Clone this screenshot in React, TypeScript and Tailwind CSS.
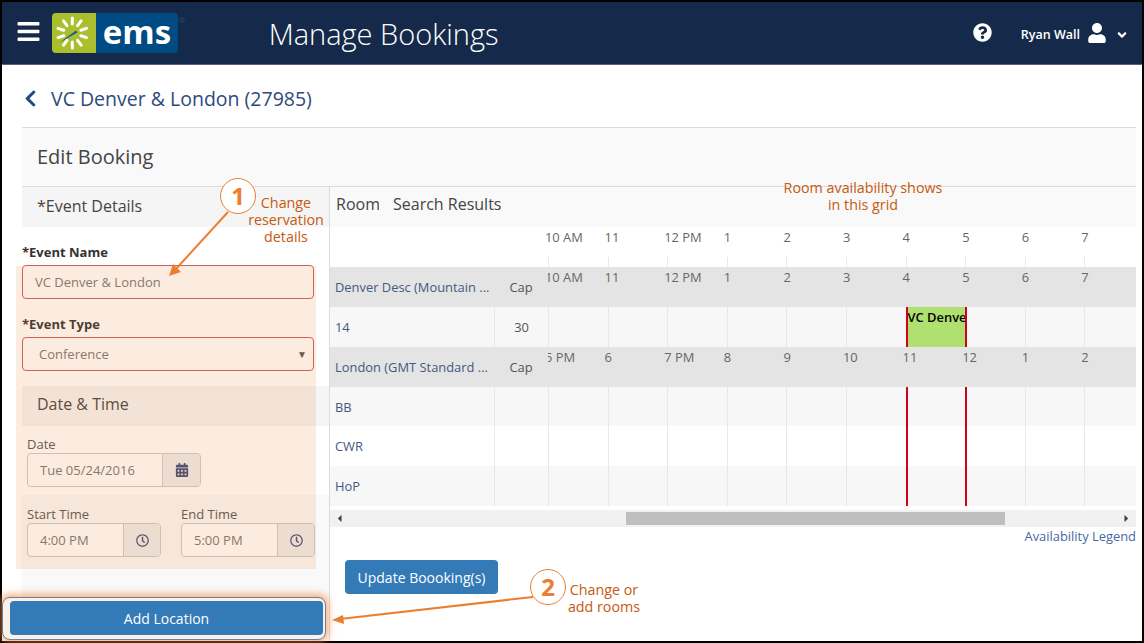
import React from 'react';
import { FaBars, FaQuestionCircle, FaUser, FaChevronLeft, FaCalendarAlt, FaRegClock, FaCaretLeft, FaCaretRight, FaAngleDown } from 'react-icons/fa';

const denverHours = ['10 AM', '11', '12 PM', '1', '2', '3', '4', '5', '6', '7'];
const londonHours = ['5 PM', '6', '7 PM', '8', '9', '10', '11', '12', '1', '2'];
const cols = [0, 1, 2, 3, 4, 5, 6, 7, 8, 9];

const LogoMark = () => (
  <svg width="44" height="40" viewBox="0 0 44 40">
    {[0, 36, 72, 108, 144, 180, 216, 252, 288, 324].map((a) => (
      <line
        key={a}
        x1={20.3 + 9 * Math.sin((a * Math.PI) / 180)}
        y1={20 - 9 * Math.cos((a * Math.PI) / 180)}
        x2={20.3 + 15 * Math.sin((a * Math.PI) / 180)}
        y2={20 - 15 * Math.cos((a * Math.PI) / 180)}
        stroke="#fff"
        strokeWidth="3"
        strokeLinecap="round"
      />
    ))}
    <path d="M7 30 L24 17.5 L25.5 19.5 Z" fill="#1d5c8f" />
  </svg>
);

const Row = ({ name, cap, bg, children }: { name: string; cap: string; bg: string; children: React.ReactNode }) => (
  <div className={`flex shrink-0 ${bg}`}>
    <div className="w-[164px] pl-[5px] pt-[2px] flex items-center text-[#44597f] whitespace-nowrap">{name}</div>
    <div className="w-[54px] pt-[2px] border-l border-[#e8e8e8] flex items-center justify-center text-[#555]">{cap}</div>
    <div className="flex-1 flex overflow-hidden">{children}</div>
  </div>
);

const HeadRow = ({ name, hours }: { name: string; hours: string[] }) => (
  <div className="flex h-[40px] shrink-0 bg-[#e4e4e4]">
    <div className="w-[164px] pl-[5px] pt-[2px] flex items-center text-[#44597f] whitespace-nowrap">{name}</div>
    <div className="w-[54px] pt-[2px] flex items-center justify-center text-[#555]">Cap</div>
    <div className="flex-1 flex overflow-hidden">
      {hours.map((h) => (
        <div key={h} className="w-[59.6px] shrink-0 text-[#666] leading-[20px] whitespace-nowrap">
          <span className="block -ml-[3px]">{h}</span>
        </div>
      ))}
    </div>
  </div>
);

const Cells = ({ red }: { red?: boolean }) => (
  <>
    {cols.map((c) => (
      <div
        key={c}
        className={`w-[59.6px] shrink-0 border-l ${red && (c === 6 || c === 7) ? 'border-l-2 border-[#d0021b]' : 'border-[#e8e8e8]'}`}
      />
    ))}
  </>
);

const AddonInput = ({ value, width, addon, icon }: { value: string; width: string; addon: string; icon: React.ReactNode }) => (
  <div className={`flex h-[34px] ${width} border border-[#ccc] rounded bg-white overflow-hidden`}>
    <div className="flex-1 pl-[12px] pt-[1px] flex items-center text-[13px] text-[#777]">{value}</div>
    <div className={`${addon} bg-[#eee] border-l border-[#ccc] flex items-center justify-center text-[#3f4a78]`}>{icon}</div>
  </div>
);

export default function App() {
  return (
    <div className="relative w-[1144px] h-[643px] bg-white overflow-hidden font-['Open_Sans',sans-serif]">
      <div className="w-[1144px] h-[643px] border-2 border-black flex flex-col">
        {/* Header */}
        <header className="h-[63px] shrink-0 bg-[#152a4a] border-b border-[#56657c] flex items-center text-white">
          <FaBars className="ml-[14px] text-[25px] -mt-[4px]" />
          <div className="ml-[11px] flex items-center h-[40px]">
            <div className="w-[44px] h-[40px] bg-[#a9bf2e] rounded-l"><LogoMark /></div>
            <div className="w-[82px] h-[40px] bg-[#004b83] rounded-r flex items-center justify-center text-[33px] font-bold leading-none pb-[3px]">ems</div>
            <span className="self-start text-[8px] text-[#1d4a7a] ml-[1px] mt-[1px]">®</span>
          </div>
          <h1 className="ml-[83px] text-[29px] font-light leading-none">Manage Bookings</h1>
          <div className="ml-auto flex items-center">
            <FaQuestionCircle className="text-[19px] -mt-[2px]" />
            <span className="ml-[29px] text-[12.5px] font-semibold mt-[4px]">Ryan Wall</span>
            <FaUser className="ml-[7px] text-[20px]" />
            <FaAngleDown className="ml-[8px] text-[14px] mt-[4px]" />
            <div className="w-[13px]" />
          </div>
        </header>

        {/* Page */}
        <div className="flex-1 pl-[20px] pr-[6px] flex flex-col">
          <div className="h-[63px] shrink-0 border-b border-[#dcdcdc] flex items-center text-[#2c4a7c] text-[19.5px]">
            <FaChevronLeft className="-ml-[1px] text-[19px] text-[#234a80] mt-[4px]" />
            <span className="ml-[11px] mt-[6px]">VC Denver &amp; London (27985)</span>
          </div>
          <div className="h-[59px] shrink-0 border-b border-[#dcdcdc] bg-[#f9f9f9] flex items-center pl-[15px] text-[20px] text-[#444]">Edit Booking</div>

          <div className="flex-1 flex">
            {/* Left column */}
            <div className="w-[308px] shrink-0 border-r border-[#dcdcdc] flex flex-col">
              <div className="h-[40px] shrink-0 bg-[#f5f5f5] flex items-center pl-[15px] pb-[2px] text-[16px] text-[#444]">*Event Details</div>
              <label className="mt-[16px] h-[18px] leading-[18px] text-[13px] font-bold text-[#333]">*Event Name</label>
              <div className="mt-[4px] w-[292px] h-[34px] shrink-0 border border-[#c9605a] rounded bg-white flex items-center pl-[12px] pt-[1px] text-[13px] text-[#777]">VC Denver &amp; London</div>
              <label className="mt-[16px] h-[18px] leading-[18px] text-[13px] font-bold text-[#333]">*Event Type</label>
              <div className="mt-[4px] w-[292px] h-[34px] shrink-0 border border-[#c9605a] rounded bg-white flex items-center pl-[16px] pr-[6px] pt-[1px] text-[13px] text-[#777]">
                Conference
                <span className="ml-auto text-[10px] text-[#555]">▼</span>
              </div>
              <div className="mt-[15px] h-[40px] shrink-0 bg-[#f5f5f5] flex items-center pl-[15px] pb-[4px] text-[16px] text-[#444]">Date &amp; Time</div>
              <label className="mt-[9px] ml-[5px] h-[18px] leading-[18px] text-[13px] text-[#555]">Date</label>
              <div className="ml-[5px]">
                <AddonInput value="Tue 05/24/2016" width="w-[174px]" addon="w-[38px]" icon={<FaCalendarAlt className="text-[14px]" />} />
              </div>
              <div className="mt-[8px] h-[105px] shrink-0 bg-[#f9f9f9] pl-[5px] pt-[10px]">
                <div className="flex gap-[20px]">
                  <div>
                    <div className="h-[18px] leading-[18px] text-[13px] text-[#555]">Start Time</div>
                    <AddonInput value="4:00 PM" width="w-[134px]" addon="w-[37px]" icon={<FaRegClock className="text-[13px]" />} />
                  </div>
                  <div>
                    <div className="h-[18px] leading-[18px] text-[13px] text-[#555]">End Time</div>
                    <AddonInput value="5:00 PM" width="w-[134px]" addon="w-[37px]" icon={<FaRegClock className="text-[13px]" />} />
                  </div>
                </div>
              </div>
              <div className="relative z-20 -mt-[3px] -ml-[20px] w-[324px] h-[43px] shrink-0 border border-[#5f85ad] rounded-lg bg-[#fdf0e6] shadow-[0_0_7px_3px_rgba(240,130,50,0.6)] pl-[7px] pr-[2px] pt-[3px]">
                <button className="w-full h-[34px] bg-[#337ab7] rounded text-white text-[14px]">Add Location</button>
              </div>
            </div>

            {/* Right column */}
            <div className="flex-1 min-w-0 flex flex-col text-[12.9px]">
              <div className="h-[40px] shrink-0 bg-[#f9f9f9] flex items-center pb-[6px] text-[16px] text-[#444]">
                <span className="ml-[6px] w-[43px] overflow-hidden">Room</span>
                <span className="ml-[14px]">Search Results</span>
              </div>
              <div className="h-[40px] shrink-0 flex">
                <div className="w-[215px] shrink-0" />
                <div className="flex-1 min-w-0 flex overflow-hidden pl-[3px]">
                  {denverHours.map((h) => (
                    <div key={h} className="w-[59.6px] shrink-0 flex flex-col">
                      <span className="-ml-[3px] leading-[20px] text-[#666] whitespace-nowrap">{h}</span>
                      <div className="mt-auto h-[10px] border-l border-[#e8e8e8]" />
                    </div>
                  ))}
                </div>
              </div>
              <HeadRow name="Denver Desc (Mountain ..." hours={denverHours} />
              <Row name="14" cap="30" bg="h-[40px] bg-[#f7f7f7]">
                {cols.map((c) => (
                  <div
                    key={c}
                    className={`w-[59.6px] shrink-0 overflow-hidden whitespace-nowrap border-l ${c === 6 ? 'border-l-2 border-[#d0021b] bg-[#b0e070] font-semibold text-black leading-[20px]' : c === 7 ? 'border-l-2 border-[#d0021b]' : 'border-[#e8e8e8]'}`}
                  >
                    {c === 6 ? 'VC Denver' : ''}
                  </div>
                ))}
              </Row>
              <HeadRow name="London (GMT Standard ..." hours={londonHours} />
              <Row name="BB" cap="" bg="h-[39px] bg-[#f7f7f7]"><Cells red /></Row>
              <Row name="CWR" cap="" bg="h-[40px] bg-white"><Cells red /></Row>
              <Row name="HoP" cap="" bg="h-[40px] bg-[#f7f7f7]"><Cells red /></Row>

              <div className="mt-[4px] h-[17px] shrink-0 bg-[#f1f1f1] flex items-center text-[#444] text-[11px]">
                <FaCaretLeft className="ml-[4px]" />
                <div className="ml-[281px] w-[379px] h-[13px] bg-[#bfbfbf]" />
                <FaCaretRight className="ml-auto mr-[4px]" />
              </div>
              <div className="text-right text-[#44699f] leading-[18px]">Availability Legend</div>
              <button className="ml-[15px] mt-[15px] w-[153px] h-[34px] bg-[#337ab7] rounded text-white text-[14px]">Update Boooking(s)</button>
            </div>
          </div>
        </div>
      </div>

      {/* Annotation layer */}
      <div className="absolute left-[16px] top-[266px] w-[300px] h-[303px] bg-[#ed7d31]/15 pointer-events-none" />
      <svg className="absolute inset-0 z-30 pointer-events-none" width="1144" height="643">
        <line x1="228" y1="212" x2="175" y2="270" stroke="#ed7d31" strokeWidth="2" />
        <path d="M169 276 L173 264 L181 272 Z" fill="#ed7d31" />
        <line x1="533" y1="597" x2="340" y2="619" stroke="#ed7d31" strokeWidth="2" />
        <path d="M332 620 L343 615 L344 624 Z" fill="#ed7d31" />
      </svg>
      <div className="absolute z-30 left-[220px] top-[178px] w-[36px] h-[36px] rounded-full border border-[#ed7d31] bg-white flex items-center justify-center text-[24px] font-bold text-[#ed7d31]">1</div>
      <div className="absolute z-30 left-[530px] top-[569px] w-[36px] h-[36px] rounded-full border border-[#ed7d31] bg-white flex items-center justify-center text-[24px] font-bold text-[#ed7d31]">2</div>
      <div className="absolute z-30 left-[236px] top-[194px] w-[100px] text-center text-[14.3px] leading-[17px] text-[#c55a11]">Change<br />reservation<br />details</div>
      <div className="absolute z-30 left-[554px] top-[581px] w-[100px] text-center text-[14.3px] leading-[17px] text-[#c55a11]">Change or<br />add rooms</div>
      <div className="absolute z-30 left-[763px] top-[179px] w-[200px] text-center text-[14.3px] leading-[17px] text-[#c55a11]">Room availability shows<br />in this grid</div>
    </div>
  );
}
